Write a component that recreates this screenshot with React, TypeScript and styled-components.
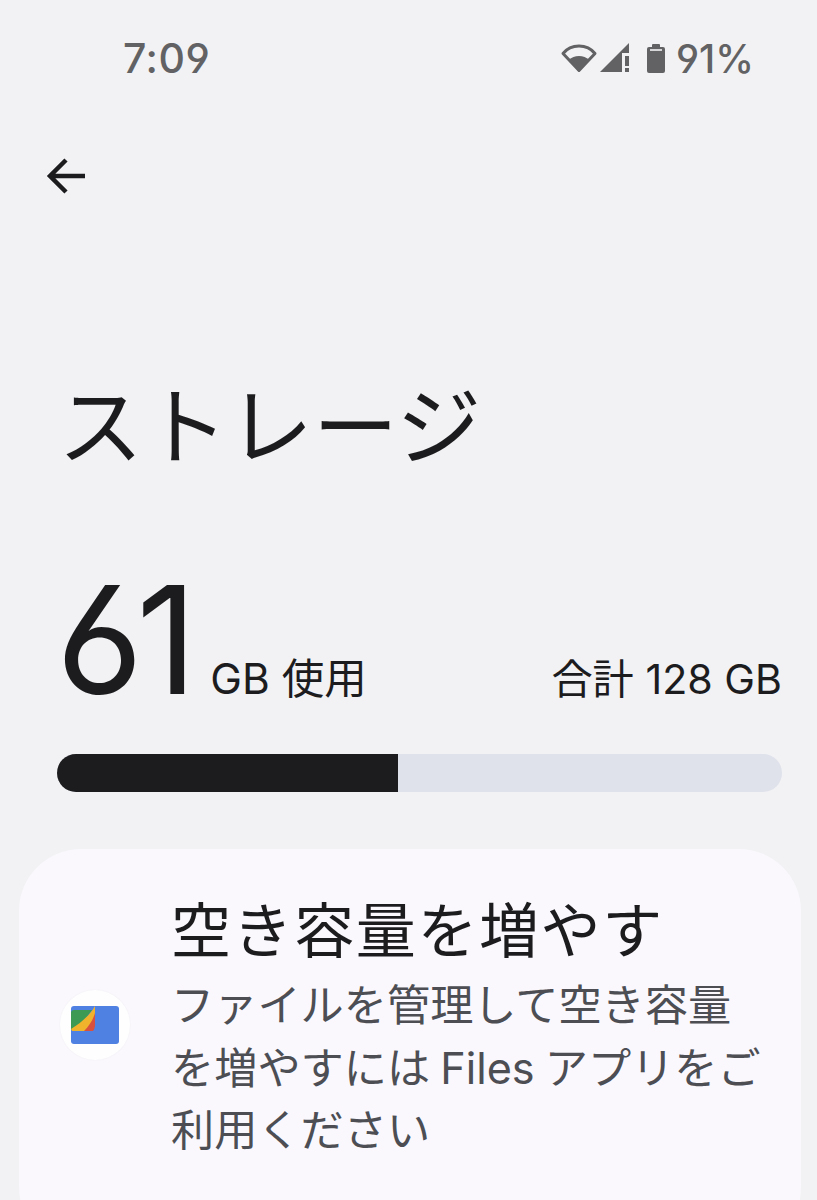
import React from 'react';
import styled, { createGlobalStyle } from 'styled-components';

const GlobalStyle = createGlobalStyle`
  html, body { margin: 0; padding: 0; background: #f2f2f4; }
  body { font-family: "Inter", "Noto Sans CJK JP", sans-serif; color: #1c1c1e; }
`;

const Page = styled.div`
  width: 817px;
  height: 1200px;
  overflow: hidden;
  background: #f2f2f4;
`;

const StatusBar = styled.div`
  display: flex;
  justify-content: space-between;
  align-items: center;
  height: 60px;
  padding: 28px 63px 0 123px;
  color: #626264;
  font-feature-settings: "cv03", "cv04", "ss01";
`;

const Clock = styled.span`
  font-size: 41px;
  font-weight: 500;
  letter-spacing: 0.5px;
`;

const StatusIcons = styled.div`
  display: flex;
  align-items: center;
`;

const StatusIcon = styled.svg<{ $gap?: number }>`
  flex: none;
  margin-left: ${(p) => p.$gap ?? 0}px;
`;

const Percent = styled.span`
  font-size: 39px;
  font-weight: 500;
  margin-left: 11px;
`;

const BackRow = styled.div`
  display: flex;
  padding: 69px 0 0 46px;
  height: 40px;
`;

const Title = styled.h1`
  margin: 169px 0 0 58px;
  font-size: 85px;
  line-height: 110px;
  font-weight: 400;
  font-family: "Noto Sans CJK JP", sans-serif;
`;

const UsageRow = styled.div`
  display: flex;
  align-items: baseline;
  justify-content: space-between;
  margin: 100px 35px 0 56px;
  height: 128px;
`;

const Used = styled.div`
  display: flex;
  align-items: baseline;
`;

const UsedValue = styled.span`
  font-size: 150px;
  font-weight: 380;
  line-height: 128px;
  letter-spacing: -7px;
  font-feature-settings: "cv03", "ss01";
`;

const UsedUnit = styled.span`
  font-size: 42.5px;
  margin-left: 20px;
`;

const Total = styled.span`
  font-size: 41.2px;
`;

const Track = styled.div`
  height: 38px;
  margin: 50px 35px 0 57px;
  border-radius: 19px;
  background: #dfe2eb;
  overflow: hidden;
`;

const Fill = styled.div`
  height: 100%;
  background: #1c1c1e;
`;

const Card = styled.section`
  display: flex;
  gap: 41px;
  margin: 57px 16px 0 19px;
  padding: 39px 32px 0 41px;
  border-radius: 62px;
  background: #faf8fd;
  height: 400px;
  box-sizing: border-box;
`;

const AppBadge = styled.div`
  flex: none;
  display: flex;
  align-items: center;
  justify-content: center;
  width: 70px;
  height: 70px;
  border-radius: 50%;
  background: #fefefe;
  box-shadow: 0 0 2px rgba(0, 0, 0, 0.05);
  margin-top: 102px;
`;

const CardBody = styled.div`
  min-width: 0;
`;

const CardTitle = styled.h2`
  margin: 0;
  font-size: 60px;
  line-height: 78px;
  font-weight: 400;
  letter-spacing: 1.600px;
  font-family: "Noto Sans CJK JP", sans-serif;
`;

const CardText = styled.p`
  margin: 8px 0 0;
  font-size: 43.2px;
  line-height: 62.5px;
  word-spacing: -2px;
  color: #4c4e54;
`;

function WifiIcon() {
  return (
    <StatusIcon width="36" height="30" viewBox="0 0 36 30">
      <path d="M18 27.500 2 10.500C6 5.500 12 3 18 3s12 2.500 16 7.500Z" fill="none" stroke="#626264" strokeWidth="3" strokeLinejoin="round" />
      <path d="M18 29 8 17c2.500-2.500 6-4 10-4s7.500 1.500 10 4Z" fill="#626264" />
    </StatusIcon>
  );
}

function SignalIcon() {
  return (
    <StatusIcon $gap={3} width="30" height="30" viewBox="0 0 30 30">
      <path d="M0 29 29 0v10h-7v19Z" fill="#626264" />
      <rect x="25" y="13" width="4" height="10" fill="#626264" />
      <rect x="25" y="25" width="4" height="4" fill="#626264" />
    </StatusIcon>
  );
}

function BatteryIcon() {
  return (
    <StatusIcon $gap={17} width="18" height="30" viewBox="0 0 18 30">
      <path d="M5 2a1 1 0 0 1 1-1h6a1 1 0 0 1 1 1v2h3a2 2 0 0 1 2 2v22a2 2 0 0 1-2 2H2a2 2 0 0 1-2-2V6a2 2 0 0 1 2-2h3Z" fill="#626264" />
      <rect x="3" y="6" width="12" height="2" fill="#d6d6d8" />
    </StatusIcon>
  );
}

function BackArrow() {
  return (
    <svg width="42" height="38" viewBox="0 0 42 38">
      <path d="M39 19H4M20 3 4 19l16 16" fill="none" stroke="#1c1c1e" strokeWidth="4.500" />
    </svg>
  );
}

function FilesLogo() {
  return (
    <svg width="48" height="38" viewBox="0 0 48 38">
      <path d="M3 0h42a3 3 0 0 1 3 3v32a3 3 0 0 1-3 3H3a3 3 0 0 1-3-3V3a3 3 0 0 1 3-3Z" fill="#4f81e3" />
      <path d="M0 24V7a3 3 0 0 1 3-3h18L6 24Z" fill="#3d9a54" />
      <path d="M24 0C19 9 10 17 0 23l1 2h15c4-4 6-9 8-15Z" fill="#f2b32c" />
      <path d="M24 7c-2 7-6 13-11 18h9c1.500-1.500 2-4 2-7Z" fill="#d9503f" />
    </svg>
  );
}

export default function App() {
  return (
    <Page>
      <GlobalStyle />
      <StatusBar>
        <Clock>7:09</Clock>
        <StatusIcons>
          <WifiIcon />
          <SignalIcon />
          <BatteryIcon />
          <Percent>91%</Percent>
        </StatusIcons>
      </StatusBar>
      <BackRow>
        <BackArrow />
      </BackRow>
      <Title>ストレージ</Title>
      <UsageRow>
        <Used>
          <UsedValue>61</UsedValue>
          <UsedUnit>GB 使用</UsedUnit>
        </Used>
        <Total>合計 128 GB</Total>
      </UsageRow>
      <Track>
        <Fill style={{ width: `${(341 / 725) * 100}%` }} />
      </Track>
      <Card>
        <AppBadge>
          <FilesLogo />
        </AppBadge>
        <CardBody>
          <CardTitle>空き容量を増やす</CardTitle>
          <CardText>ファイルを管理して空き容量を増やすには Files アプリをご利用ください</CardText>
        </CardBody>
      </Card>
    </Page>
  );
}
